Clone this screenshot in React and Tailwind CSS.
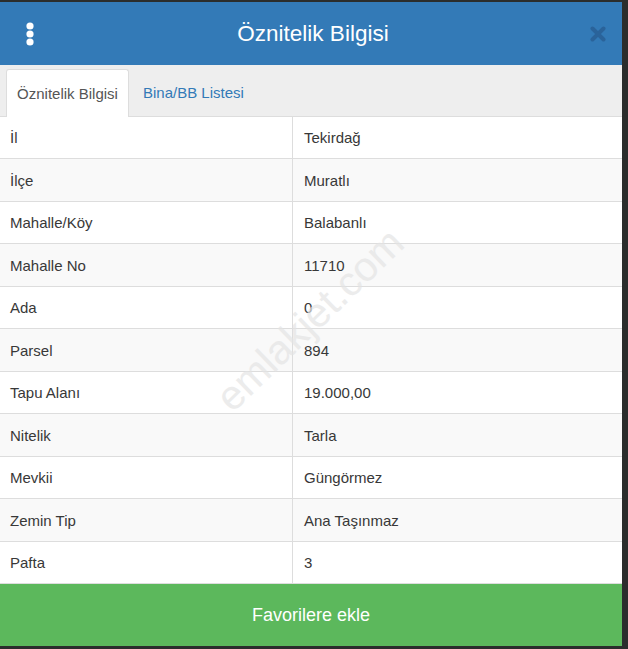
import React from 'react';

const rows = [
  ['İl', 'Tekirdağ'],
  ['İlçe', 'Muratlı'],
  ['Mahalle/Köy', 'Balabanlı'],
  ['Mahalle No', '11710'],
  ['Ada', '0'],
  ['Parsel', '894'],
  ['Tapu Alanı', '19.000,00'],
  ['Nitelik', 'Tarla'],
  ['Mevkii', 'Güngörmez'],
  ['Zemin Tip', 'Ana Taşınmaz'],
  ['Pafta', '3'],
];

const App = () => {
  return (
    <div className="w-[628px] h-[649px] bg-[#2b2d2c] pt-[2px] overflow-hidden" style={{ fontFamily: '"Liberation Sans", Arial, sans-serif' }}>
      <div className="relative w-[622px] bg-white">
        {/* header */}
        <div className="h-[63px] bg-[#337ab7] flex items-center justify-between px-[24px]">
          <svg width="12" height="24" viewBox="0 0 12 24">
            <circle cx="6" cy="4" r="3.6" fill="#fff" />
            <circle cx="6" cy="12" r="3.6" fill="#fff" />
            <circle cx="6" cy="20" r="3.6" fill="#fff" />
          </svg>
          <h1 className="text-[22.5px] text-white">Öznitelik Bilgisi</h1>
          <svg width="16" height="16" viewBox="0 0 16 16" className="mr-[-8px]">
            <path d="M2.5 2.5 L13.5 13.5 M13.5 2.5 L2.5 13.5" stroke="#2a639a" strokeWidth="4" strokeLinecap="round" />
          </svg>
        </div>

        {/* tabs */}
        <div className="h-[52px] bg-[#eeeeee] flex items-end pl-[6px] border-b border-[#dddddd]">
          <div className="h-[48px] w-[123px] bg-white border border-b-0 border-[#dddddd] rounded-t-[3px] flex items-center justify-center pt-[2px] text-[15px] text-[#555] mb-[-1px]">
            Öznitelik Bilgisi
          </div>
          <div className="h-[48px] flex items-center pt-[2px] pl-[14px] text-[15px] text-[#337ab7]">Bina/BB Listesi</div>
        </div>

        {/* table */}
        <div>
          {rows.map(([k, v], i) => (
            <div
              key={k}
              className={`flex text-[15px] text-[#383838] border-b border-[#dddddd] ${i % 2 === 0 ? 'h-[42px] bg-white' : 'h-[43px] bg-[#f9f9f9]'}`}
            >
              <div className="w-[293px] border-r border-[#dddddd] flex items-center pt-[2px] pl-[10px]">{k}</div>
              <div className="flex-1 flex items-center pt-[2px] pl-[11px]">{v}</div>
            </div>
          ))}
        </div>

        {/* button */}
        <button className="w-full h-[62px] bg-[#5cb85c] text-white text-[18px] flex items-center justify-center pt-[1px]">
          Favorilere ekle
        </button>

        {/* watermark */}
        <div className="absolute left-[310px] top-[318px] w-0 h-0 pointer-events-none select-none">
          <div className="-translate-x-1/2 -translate-y-1/2 -rotate-[44deg] whitespace-nowrap text-[41px] leading-none text-[#e4e4e4] opacity-70 w-max">
            emlakjet.com
          </div>
        </div>
      </div>
    </div>
  );
};

export default App;
